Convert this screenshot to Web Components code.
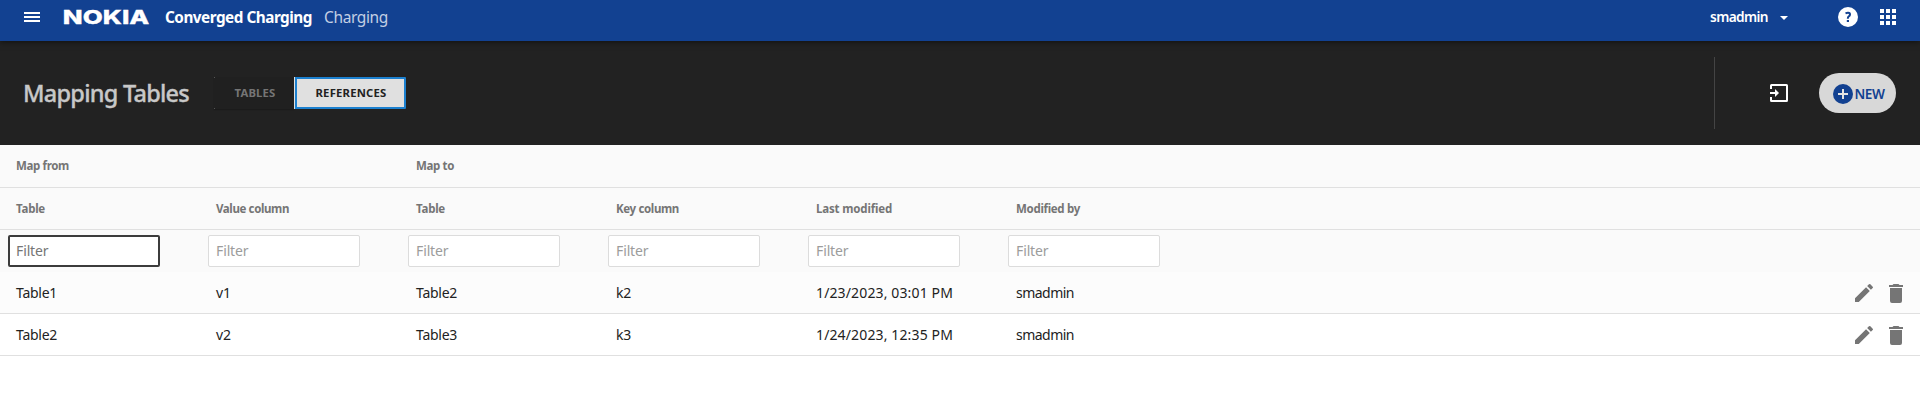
<!DOCTYPE html>
<html lang="en">
<head>
<meta charset="utf-8">
<title>Mapping Tables</title>
<style>
html,body{margin:0;padding:0;background:#fff;height:100%;overflow:hidden}
body{font-family:"Noto Sans","Open Sans",sans-serif;font-size:14px;color:#222}
</style>
</head>
<body>
<mapping-app></mapping-app>
<script>
function define(name, html, setup) {
  const t = document.createElement('template');
  t.innerHTML = html;
  customElements.define(name, class extends HTMLElement {
    constructor() {
      super();
      this.attachShadow({ mode: 'open' }).append(t.content.cloneNode(true));
    }
    connectedCallback() { if (setup) setup.call(this, this.shadowRoot); }
  });
}

// Single-line label whose tracking is adjusted to a given width (w, in px).
define('fit-label', `<style>
:host{display:inline-block;white-space:nowrap;line-height:20px}
span{display:inline-block}
</style><span><slot></slot></span>`, function (root) {
  const w = parseFloat(this.getAttribute('w'));
  if (!w) return;
  const span = root.querySelector('span');
  const n = this.textContent.length;
  const natural = span.getBoundingClientRect().width;
  span.style.letterSpacing = ((w - natural) / n).toFixed(3) + 'px';
  this.style.width = w + 'px';
});

define('ui-icon', `<style>:host{display:block;flex:none}svg{display:block}</style><svg></svg>`, function (root) {
  const shapes = {
    menu: [16, 10, '<path d="M0 0h16v2H0zM0 4h16v2H0zM0 8h16v2H0z"/>'],
    caret: [8, 4, '<path d="M0 0h8L4 4z"/>'],
    help: [20, 20, '<circle cx="10" cy="10" r="10"/><path fill="none" stroke="#124191" stroke-width="2" d="M7.500 6.400Q9 5.700 10.200 5.800Q12.100 6 12 7.600Q11.900 8.700 10.800 9.300Q9.800 9.900 9.800 11.700"/><path fill="#124191" d="M8.800 13h2.200v2H8.800z"/>'],
    apps: [16, 16, '<path d="M0 0h4v4H0zM6 0h4v4H6zM12 0h4v4h-4zM0 6h4v4H0zM6 6h4v4H6zM12 6h4v4h-4zM0 12h4v4H0zM6 12h4v4H6zM12 12h4v4h-4z"/>'],
    import: [18, 18, '<path d="M0 5V1.500Q0 0 1.500 0h15Q18 0 18 1.500v15q0 1.500-1.500 1.500h-15Q0 18 0 16.500V13h2v3h14V2H2v3z"/><path d="M0 8h5V5l4 4-4 4v-3H0z"/>'],
    plus: [20, 20, '<circle cx="10" cy="10" r="10"/><path fill="#e4e4e4" d="M9 5h2v4h4v2h-4v4H9v-4H5V9h4z"/>'],
    edit: [24, 24, '<path d="M3 17.250V21h3.750L17.810 9.940l-3.750-3.750L3 17.250zM20.710 7.040a1 1 0 0 0 0-1.410l-2.340-2.340a1 1 0 0 0-1.410 0l-1.830 1.830 3.750 3.750 1.830-1.830z"/>'],
    trash: [24, 24, '<path d="M6 7h12v13q0 2-2 2H8q-2 0-2-2zM19 4v2H5V4h3.500l1-1h5l1 1z"/>']
  };
  const [w, h, body] = shapes[this.getAttribute('name')];
  const svg = root.querySelector('svg');
  svg.setAttribute('width', w);
  svg.setAttribute('height', h);
  svg.setAttribute('viewBox', `0 0 ${w} ${h}`);
  svg.setAttribute('fill', 'currentColor');
  svg.innerHTML = body;
});

define('brand-logo', `<style>:host{display:block;width:85px;height:14px}svg{display:block;overflow:visible}</style>
<svg width="85" height="14" viewBox="0 0 85 14"><text x="-1.200" y="14" fill="#fff" stroke="#fff" stroke-width=".3" font-family="Inter,sans-serif" font-weight="800" font-size="19.200" textLength="86.500" lengthAdjust="spacingAndGlyphs">NOKIA</text></svg>`);

define('app-bar', `<style>
:host{display:flex;align-items:center;height:41px;padding:0 24px 13px;box-sizing:border-box;background:#124191;color:#fff;position:relative;box-shadow:0 1px 6px rgba(0,0,0,.55)}
:host>*{flex:none}
.menu{margin:6px 24px 0 0}
brand-logo{margin:6px 16px 0 0}
fit-label{margin-top:5px}
.product{font-size:15.3px;font-weight:700;margin-right:12px}
.area{font-size:15.5px;font-weight:400;color:#c3cfe4}
.user{font-size:13.7px;font-weight:600;margin-left:auto;margin-right:12px}
.caret{margin:7px 50px 0 0}
.help{margin:6px 22px 0 0}
.apps{margin-top:6px}
</style>
<ui-icon class="menu" name="menu"></ui-icon><brand-logo></brand-logo>
<fit-label class="product" w="147">Converged Charging</fit-label>
<fit-label class="area" w="64">Charging</fit-label>
<fit-label class="user" w="58">smadmin</fit-label>
<ui-icon class="caret" name="caret"></ui-icon>
<ui-icon class="help" name="help"></ui-icon>
<ui-icon class="apps" name="apps"></ui-icon>`);

define('view-toggle', `<style>
:host{display:flex;height:32px;font-size:11.3px;font-weight:700}
div{box-sizing:border-box;display:flex;align-items:center;justify-content:center}
.off{width:80px;padding-left:2px;color:#757575;background:
 linear-gradient(#555,#555) 0 0/1px 1px no-repeat,linear-gradient(#555,#555) 0 100%/1px 1px no-repeat,#202020;box-shadow:0 1px 1px #1b1b1b}
.on{width:111px;padding-left:1px;color:#222;background:#e0e0e0;border:2px solid #1c80cf;border-radius:0 1px 1px 0}
.edge{width:1px;background:#e0e0e0}
</style>
<div class="off"><fit-label w="41">TABLES</fit-label></div><div class="edge"></div>
<div class="on"><fit-label w="71">REFERENCES</fit-label></div>`);

define('new-button', `<style>
:host{display:flex;align-items:center;box-sizing:border-box;width:77px;height:40px;border-radius:20px;padding:2px 0 0 14px;background:#d8d8d8;color:#124191;font-size:13.6px;font-weight:600}
fit-label{margin-left:1.5px}
</style><ui-icon name="plus"></ui-icon><fit-label w="30">NEW</fit-label>`);

define('page-header', `<style>
:host{display:flex;align-items:center;box-sizing:border-box;height:104px;padding:0 24px;background:#222;color:#c8c8c8}
:host>*{flex:none}
.title{font-size:23.5px;font-weight:500;-webkit-text-stroke:.35px #c8c8c8;line-height:30px;margin-right:25px;margin-left:-1px}
.rule{margin-left:auto;width:1px;height:72px;background:#444;margin-right:55px}
ui-icon{color:#fff;margin-right:31px}
</style>
<fit-label class="title" w="166">Mapping Tables</fit-label>
<view-toggle></view-toggle>
<div class="rule"></div><ui-icon name="import"></ui-icon><new-button></new-button>`);

define('filter-box', `<style>
:host{display:flex;align-items:center;box-sizing:border-box;width:152px;height:32px;margin-left:8px;padding-left:7px;background:#fff;border:1px solid #dcdcdc;border-radius:2px;color:#9c9c9c}
:host([active]){border:2px solid #3c3c3c;padding-left:6px;color:#757575}
</style><fit-label w="32.5">Filter</fit-label>`);

define('table-row', `<style>
:host{display:grid;grid-template-columns:repeat(6,200px) 1fr;align-items:center;box-sizing:border-box;height:42px;border-bottom:1px solid #e0e0e0}
:host([kind=group]){height:43px}
:host([kind=group]),:host([kind=head]){background:#fafafa;color:#757575;font-size:11.5px;font-weight:700}
:host([kind=filter]){background:#fafafa;border-bottom-color:#fafafa}
:host([kind=striped]){background:#fcfcfc}
::slotted(fit-label){margin-left:16px}
::slotted(row-actions){grid-column:7}
</style><slot></slot>`);

define('row-actions', `<style>
:host{display:flex;justify-content:flex-end;gap:8px;padding-right:12px;color:#757575}
</style><ui-icon name="edit"></ui-icon><ui-icon name="trash"></ui-icon>`);

define('mapping-table', `<style>:host{display:block}.to{grid-column:3}</style>
<table-row kind="group"><fit-label w="53">Map from</fit-label><fit-label class="to" w="38">Map to</fit-label></table-row>
<table-row kind="head"><fit-label w="29">Table</fit-label><fit-label w="73">Value column</fit-label><fit-label w="29">Table</fit-label><fit-label w="63">Key column</fit-label><fit-label w="76">Last modified</fit-label><fit-label w="64">Modified by</fit-label></table-row>
<table-row kind="filter"><filter-box active></filter-box><filter-box></filter-box><filter-box></filter-box><filter-box></filter-box><filter-box></filter-box><filter-box></filter-box></table-row>
<table-row kind="striped"><fit-label w="41">Table1</fit-label><fit-label w="15">v1</fit-label><fit-label w="41">Table2</fit-label><fit-label w="15">k2</fit-label><fit-label w="137">1/23/2023, 03:01 PM</fit-label><fit-label w="58">smadmin</fit-label><row-actions></row-actions></table-row>
<table-row><fit-label w="41">Table2</fit-label><fit-label w="15">v2</fit-label><fit-label w="41">Table3</fit-label><fit-label w="15">k3</fit-label><fit-label w="137">1/24/2023, 12:35 PM</fit-label><fit-label w="58">smadmin</fit-label><row-actions></row-actions></table-row>`);

define('mapping-app', `<style>:host{display:block}</style><app-bar></app-bar><page-header></page-header><mapping-table></mapping-table>`);
</script>
</body>
</html>
